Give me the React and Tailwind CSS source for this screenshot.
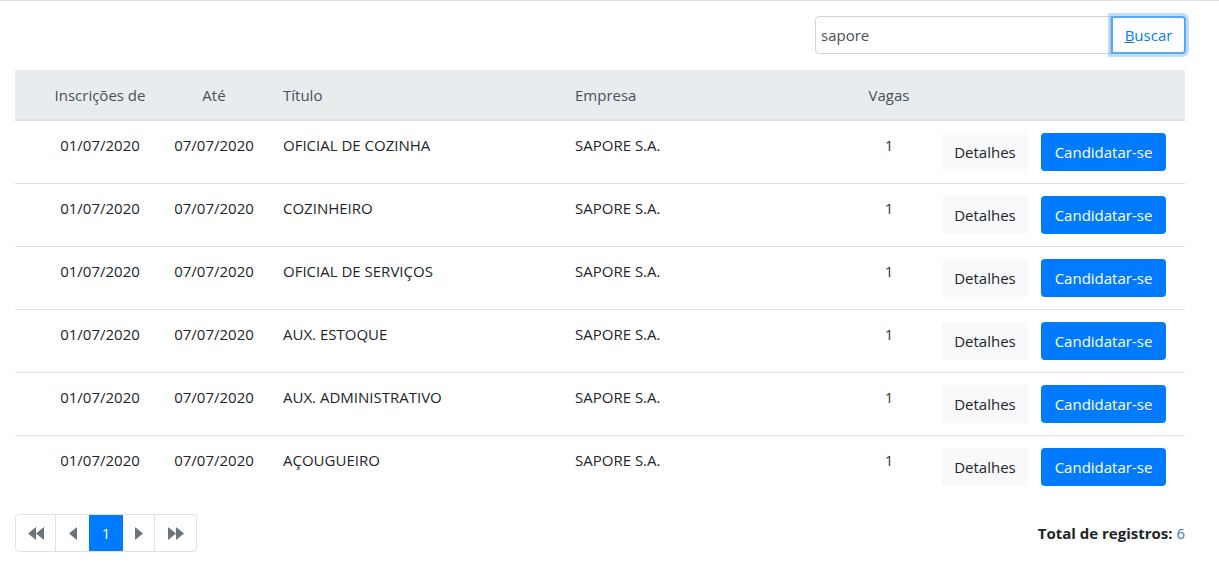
const rows = [
  "OFICIAL DE COZINHA",
  "COZINHEIRO",
  "OFICIAL DE SERVIÇOS",
  "AUX. ESTOQUE",
  "AUX. ADMINISTRATIVO",
  "AÇOUGUEIRO",
];

const cols = "grid grid-cols-[158px_98px_292px_293px_66px_263px]";

function Tri({ dir = "left", double = false }) {
  const one = dir === "left" ? "M8 0 L8 13 L0 6.5 Z" : "M0 0 L0 13 L8 6.5 Z";
  const two = dir === "left" ? "M16 0 L16 13 L8 6.5 Z" : "M8 0 L8 13 L16 6.5 Z";
  return (
    <svg width={double ? 16 : 8} height="13" viewBox={double ? "0 0 16 13" : "0 0 8 13"} fill="#6c757d">
      <path d={one} />
      {double && <path d={two} />}
    </svg>
  );
}

export default function App() {
  return (
    <main
      className="min-h-screen w-[1219px] border-t border-[#dee2e6] bg-white text-[15px] text-[#212529]"
      style={{ fontFamily: '"Open Sans", "Noto Sans", sans-serif' }}
    >
      <div className="flex justify-end px-[33px] pt-[15px]">
        <div className="flex">
          <input
            readOnly
            value="sapore"
            className="h-[38px] w-[296px] rounded-l-[4px] border border-[#ced4da] px-[5px] text-[15px] text-[#495057] outline-none"
          />
          <button className="h-[38px] w-[75px] rounded-r-[4px] border-2 border-[#5aa9f0] bg-white text-[15px] text-[#007bff] shadow-[0_0_0_3px_rgba(0,123,255,0.25)]">
            <span className="underline">B</span>uscar
          </button>
        </div>
      </div>

      <div className="mx-[15px] mt-[16px] w-[1170px]">
        <div className={`${cols} h-[51px] border-b-2 border-[#dee2e6] bg-[#e9ecef] text-[#495057]`}>
          <div className="pl-[12px] pt-[14px] text-center">Inscrições de</div>
          <div className="pr-[16px] pt-[14px] text-center">Até</div>
          <div className="pl-[12px] pt-[14px]">Título</div>
          <div className="pl-[12px] pt-[14px]">Empresa</div>
          <div className="pt-[14px] text-center">Vagas</div>
          <div />
        </div>
        {rows.map((t, i) => (
          <div
            key={t}
            className={`${cols} h-[63px] ${i < rows.length - 1 ? "border-b border-[#dee2e6]" : ""}`}
          >
            <div className="pl-[12px] pt-[13px] text-center whitespace-nowrap">01/07/2020</div>
            <div className="pr-[16px] pt-[13px] text-center whitespace-nowrap">07/07/2020</div>
            <div className="pl-[12px] pt-[13px] whitespace-nowrap">{t}</div>
            <div className="pl-[12px] pt-[13px]">SAPORE S.A.</div>
            <div className="pt-[13px] text-center text-[#2a3a2a]">1</div>
            <div className="flex items-start gap-[13px] pl-[20px] pt-[12px]">
              <button className="h-[38px] w-[86px] rounded-[4px] bg-[#f8f9fa] text-[15px] text-[#212529]">
                Detalhes
              </button>
              <button className="h-[38px] w-[125px] rounded-[4px] bg-[#007bff] text-[15px] text-white">
                Candidatar-se
              </button>
            </div>
          </div>
        ))}
      </div>

      <div className="mx-[15px] mt-[15px] flex w-[1170px] items-center justify-between">
        <div className="flex h-[38px] overflow-hidden rounded-[4px] border border-[#dee2e6]">
          <div className="flex w-[40px] items-center justify-center border-r border-[#dee2e6]">
            <Tri dir="left" double />
          </div>
          <div className="flex w-[33px] items-center justify-center">
            <Tri dir="left" />
          </div>
          <div className="flex w-[34px] items-center justify-center bg-[#007bff] text-white">1</div>
          <div className="flex w-[32px] items-center justify-center border-r border-[#dee2e6]">
            <Tri dir="right" />
          </div>
          <div className="flex w-[41px] items-center justify-center">
            <Tri dir="right" double />
          </div>
        </div>
        <div className="text-[15px] font-bold">
          Total de registros: <span className="font-normal text-[#3a7bbf]">6</span>
        </div>
      </div>
    </main>
  );
}
